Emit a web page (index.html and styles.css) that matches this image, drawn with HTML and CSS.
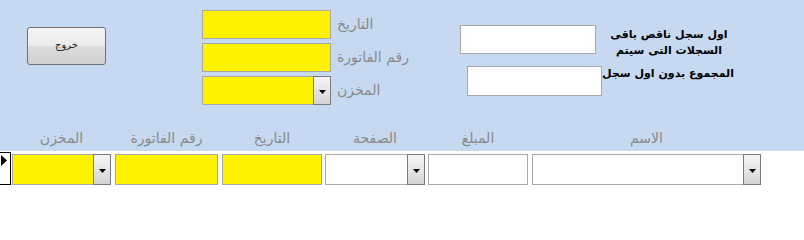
FILE: index.html
```html
<!DOCTYPE html>
<html lang="ar">
<head>
<meta charset="utf-8">
<link rel="stylesheet" href="styles.css">
</head>
<body>
<div class="panel">
  <div class="upper">
    <button class="exit" type="button">خروج</button>
    <div class="fields">
      <div class="box yellow"></div><div class="flabel">التاريخ</div>
      <div class="box yellow"></div><div class="flabel">رقم الفاتورة</div>
      <div class="box yellow combo"><span class="drop"><svg width="7" height="4" viewBox="0 0 7 4"><path d="M0 0H7L3.5 4Z" fill="#000"/></svg></span></div><div class="flabel">المخزن</div>
    </div>
    <div class="summary">
      <div class="box white s1"></div>
      <div class="slabel">اول سجل ناقص باقى<br>السجلات التى سيتم</div>
      <div class="box white s2"></div>
      <div class="slabel">المجموع بدون اول سجل</div>
    </div>
  </div>
  <div class="heads">
    <div class="h c1">المخزن</div>
    <div class="h c2">رقم الفاتورة</div>
    <div class="h c3">التاريخ</div>
    <div class="h c4">الصفحة</div>
    <div class="h c5">المبلغ</div>
    <div class="h c6">الاسم</div>
  </div>
</div>
<div class="row">
  <div class="selector"><svg width="7" height="11" viewBox="0 0 7 11"><path d="M0 0L6 5.5L0 11Z" fill="#000"/></svg></div>
  <div class="box yellow combo c1"><span class="drop"><svg width="7" height="4" viewBox="0 0 7 4"><path d="M0 0H7L3.5 4Z" fill="#000"/></svg></span></div>
  <div class="box yellow c2"></div>
  <div class="box yellow c3"></div>
  <div class="box white combo c4"><span class="drop"><svg width="7" height="4" viewBox="0 0 7 4"><path d="M0 0H7L3.5 4Z" fill="#000"/></svg></span></div>
  <div class="box white c5"></div>
  <div class="box white combo c6"><span class="drop"><svg width="7" height="4" viewBox="0 0 7 4"><path d="M0 0H7L3.5 4Z" fill="#000"/></svg></span></div>
</div>
</body>
</html>
```
FILE: styles.css
```css
* { box-sizing: border-box; }
body {
  margin: 0;
  background: #ffffff;
  font-family: "DejaVu Sans", Tahoma, sans-serif;
}
.panel {
  background: #c6d9f0;
  height: 151px;
}
.upper {
  display: flex;
  align-items: flex-start;
  height: 123px;
}
.exit {
  margin: 27px 0 0 27px;
  width: 79px;
  height: 38px;
  border: 1px solid #707070;
  border-radius: 3px;
  background: linear-gradient(#f3f3f3 0%, #ebebeb 50%, #dddddd 51%, #cfcfcf 100%);
  font-family: "DejaVu Sans", Tahoma, sans-serif;
  font-size: 10px;
  color: #222;
  padding: 0 0 4px 0;
}
.fields {
  margin: 10px 0 0 96px;
  display: grid;
  grid-template-columns: 129px 80px;
  grid-auto-rows: 29px;
  column-gap: 6px;
  row-gap: 4px;
}
.box {
  border: 1px solid #a8a8a8;
  position: relative;
}
.yellow { background: #fff200; }
.white { background: #ffffff; }
.flabel {
  font-size: 14px;
  color: #8a8a8a;
  line-height: 29px;
  white-space: nowrap;
  direction: rtl;
  text-align: left;
}
.combo .drop {
  position: absolute;
  top: -1px;
  right: -1px;
  bottom: -1px;
  width: 18px;
  border: 1px solid #7a7a7a;
  background: linear-gradient(#f6f6f6, #e6e6e6 50%, #d2d2d2);
  display: flex;
  align-items: center;
  justify-content: center;
  padding-top: 2px;
}
.summary {
  margin: 25px 0 0 43px;
  display: grid;
  grid-template-columns: 144px 130px;
  grid-template-rows: 41px 30px;
}
.s1 { width: 136px; height: 29px; }
.s2 { width: 135px; height: 30px; margin-left: 7px; }
.slabel {
  font-size: 11px;
  font-weight: bold;
  color: #000;
  text-align: center;
  line-height: 16px;
  direction: rtl;
  padding-top: 2px;
  white-space: nowrap;
}
.summary .slabel:last-child { padding-top: 0; }
.heads {
  display: flex;
  height: 28px;
  padding-left: 11px;
}
.h {
  font-size: 14px;
  color: #8a8a8a;
  line-height: 30px;
  text-align: center;
  direction: rtl;
  white-space: nowrap;
}
.c1 { width: 99px; margin-left: 1px; }
.c2 { width: 103px; margin-left: 4px; }
.c3 { width: 100px; margin-left: 4px; }
.c4 { width: 100px; margin-left: 3px; }
.c5 { width: 100px; margin-left: 3px; }
.c6 { width: 229px; margin-left: 4px; }
.row {
  display: flex;
  align-items: flex-start;
  margin-top: 1px;
}
.selector {
  width: 12px;
  height: 33px;
  margin-left: -1px;
  border: 1px solid #000;
  background: #fff;
  padding: 2px 0 0 1px;
  line-height: 0;
}
.row .box {
  height: 31px;
  margin-top: 2px;
}
```
